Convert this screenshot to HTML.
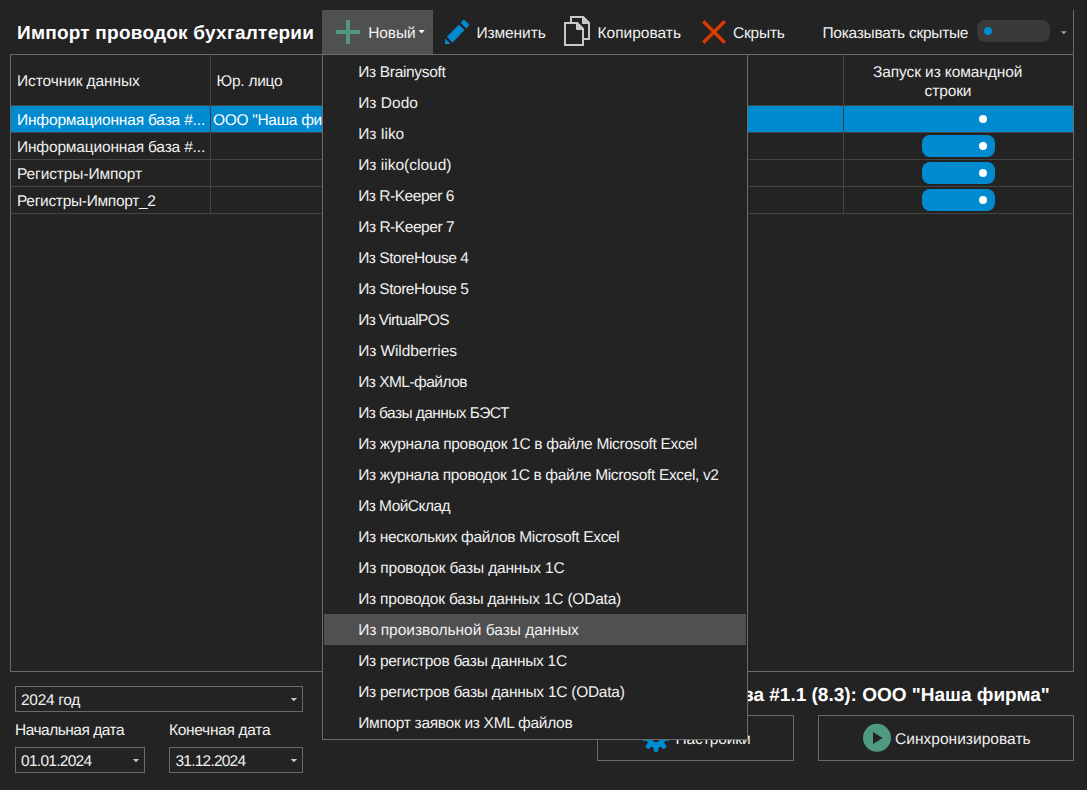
<!DOCTYPE html>
<html><head><meta charset="utf-8">
<style>
*{box-sizing:border-box;margin:0;padding:0}
html,body{width:1087px;height:790px;overflow:hidden;background:#232323;font-family:"Liberation Sans",sans-serif;color:#f0f0f0;text-rendering:geometricPrecision}
.a{position:absolute;white-space:nowrap}
.t{font-size:15.5px;line-height:18px}
.b{font-size:19px;line-height:22px;font-weight:bold;color:#fff}
.hl{position:absolute;background:#6a6a6a;height:1px}
.vl{position:absolute;background:#6a6a6a;width:1px}
.box{position:absolute;border:1px solid #6a6a6a}
</style></head><body>
<div class="a b" style="left:17px;top:23px;letter-spacing:0.23px;">Импорт проводок бухгалтерии</div>
<div class="a" style="left:322px;top:10px;width:111px;height:44px;background:#505050"></div>
<svg class="a" style="left:330px;top:14px" width="36" height="36" viewBox="0 0 36 36"><rect x="16" y="6" width="4" height="24" rx="1" fill="#52977e"/><rect x="6" y="16" width="24" height="4" rx="1" fill="#52977e"/></svg>
<div class="a t" style="left:368.2px;top:25px;letter-spacing:-0.1px;">Новый</div>
<svg class="a" style="left:410px;top:22px" width="20" height="18"><path d="M8.6 8H14.6L11.6 11.4Z" fill="#ffffff"/></svg>
<svg class="a" style="left:440px;top:15px" width="35" height="35" viewBox="0 0 35 35"><path d="M5 23.5L5 29L10.6 29Z" fill="#008acf"/><path d="M6.9 21.7L18.8 9.7L24.6 15.1L12.4 27.7Z" fill="#008acf"/><path d="M20.8 7.8L23.9 4.8L29 9.5L26.4 13.3Z" fill="#008acf" stroke="#008acf" stroke-width="0.6" stroke-linejoin="round"/></svg>
<div class="a t" style="left:476.5px;top:25px;letter-spacing:-0.1px;">Изменить</div>
<svg class="a" style="left:558px;top:12px" width="38" height="38" viewBox="0 0 38 38">
<path d="M13 5H25L31 11V27H13Z" fill="#232323" stroke="#c8c8c8" stroke-width="2"/>
<path d="M25 5V11H31Z" fill="#c8c8c8" stroke="#c8c8c8" stroke-width="2" stroke-linejoin="round"/>
<path d="M7 11H19L25 17V33H7Z" fill="#232323" stroke="#c8c8c8" stroke-width="2"/>
<path d="M19 11V17H25Z" fill="#c8c8c8" stroke="#c8c8c8" stroke-width="2" stroke-linejoin="round"/>
</svg>
<div class="a t" style="left:597.5px;top:25px;letter-spacing:0px;">Копировать</div>
<svg class="a" style="left:696px;top:14px" width="36" height="36" viewBox="0 0 36 36"><path d="M7.2 7.2L28.8 28.8M28.8 7.2L7.2 28.8" stroke="#d83b01" stroke-width="3.5"/></svg>
<div class="a t" style="left:733px;top:25px;letter-spacing:-0.2px;">Скрыть</div>
<div class="a t" style="left:822.5px;top:25px;letter-spacing:-0.27px;">Показывать скрытые</div>
<div class="a" style="left:977px;top:20px;width:73px;height:22px;border-radius:8px;background:#3a3a3a"></div>
<div class="a" style="left:984px;top:27px;width:8px;height:8px;border-radius:50%;background:#008acf"></div>
<svg class="a" style="left:1055px;top:25px" width="18" height="14"><path d="M5.8 6.3H11.8L8.8 9.3Z" fill="#a0a0a0"/></svg>
<div class="hl" style="left:10px;top:54px;width:1064px"></div>
<div class="vl" style="left:1073px;top:10px;height:662px"></div>
<div class="vl" style="left:10px;top:54px;height:618px"></div>
<div class="hl" style="left:10px;top:671px;width:1064px"></div>
<div class="hl" style="left:11px;top:105px;width:1062px;background:#444444"></div>
<div class="vl" style="left:210px;top:55px;height:159px;background:#444444"></div>
<div class="vl" style="left:843px;top:55px;height:159px;background:#444444"></div>
<div class="a t" style="left:17px;top:73px;letter-spacing:-0.1px;">Источник данных</div>
<div class="a t" style="left:216.5px;top:73px;letter-spacing:-0.25px;">Юр. лицо</div>
<div class="a t" style="left:873px;top:64px;letter-spacing:-0.1px;">Запуск из командной</div>
<div class="a t" style="left:924.5px;top:83px;letter-spacing:-0.1px;">строки</div>
<div class="a" style="left:11px;top:106px;width:1062px;height:26px;background:#008acf"></div>
<div class="vl" style="left:210px;top:106px;height:26px;background:#3c3c3c"></div>
<div class="vl" style="left:843px;top:106px;height:26px;background:#3c3c3c"></div>
<div class="hl" style="left:11px;top:132px;width:1062px;background:#444444"></div>
<div class="hl" style="left:11px;top:159px;width:1062px;background:#444444"></div>
<div class="hl" style="left:11px;top:186px;width:1062px;background:#444444"></div>
<div class="hl" style="left:11px;top:213px;width:1062px;background:#444444"></div>
<div class="a t" style="left:17px;top:112px;letter-spacing:-0.17px;color:#fff">Информационная база #...</div>
<div class="a t" style="left:213px;top:112px;letter-spacing:-0.3px;color:#fff;width:109px;overflow:hidden">ООО "Наша фирма"</div>
<div class="a t" style="left:17px;top:139px;letter-spacing:-0.17px;">Информационная база #...</div>
<div class="a t" style="left:17px;top:166px;letter-spacing:-0.1px;">Регистры-Импорт</div>
<div class="a t" style="left:17px;top:193px;letter-spacing:-0.3px;">Регистры-Импорт_2</div>
<div class="a" style="left:979px;top:115px;width:8px;height:8px;border-radius:50%;background:#fff"></div>
<div class="a" style="left:922px;top:135px;width:73px;height:22px;border-radius:8px;background:#008acf"></div>
<div class="a" style="left:979px;top:142px;width:8px;height:8px;border-radius:50%;background:#fff"></div>
<div class="a" style="left:922px;top:162px;width:73px;height:22px;border-radius:8px;background:#008acf"></div>
<div class="a" style="left:979px;top:169px;width:8px;height:8px;border-radius:50%;background:#fff"></div>
<div class="a" style="left:922px;top:189px;width:73px;height:22px;border-radius:8px;background:#008acf"></div>
<div class="a" style="left:979px;top:196px;width:8px;height:8px;border-radius:50%;background:#fff"></div>
<div class="box" style="left:15px;top:686px;width:288px;height:26px"></div>
<div class="a t" style="left:21px;top:692px;letter-spacing:-0.3px;">2024 год</div>
<svg class="a" style="left:285px;top:692px" width="16" height="14"><path d="M5.7 6H12.1L8.9 9.2Z" fill="#c8c8c8"/></svg>
<div class="a t" style="left:15px;top:722px;letter-spacing:-0.5px;">Начальная дата</div>
<div class="a t" style="left:169px;top:722px;letter-spacing:-0.3px;">Конечная дата</div>
<div class="box" style="left:15px;top:747px;width:130px;height:26px"></div>
<div class="a t" style="left:21px;top:753px;letter-spacing:-0.72px;">01.01.2024</div>
<svg class="a" style="left:127px;top:753px" width="16" height="14"><path d="M5.9 6H12.1L9 9.2Z" fill="#c8c8c8"/></svg>
<div class="box" style="left:169px;top:747px;width:134px;height:26px"></div>
<div class="a t" style="left:175.5px;top:753px;letter-spacing:-0.78px;">31.12.2024</div>
<svg class="a" style="left:285px;top:753px" width="16" height="14"><path d="M5.7 6H12.1L8.9 9.2Z" fill="#c8c8c8"/></svg>
<div class="a b" style="left:548px;top:685px;letter-spacing:0px;">Информационная база #1.1 (8.3): ООО "Наша фирма"</div>
<div class="box" style="left:597px;top:715px;width:197px;height:46px"></div>
<svg class="a" style="left:630px;top:712px" width="52" height="52" viewBox="0 0 52 52"><path d="M23.28 35.29 L23.98 39.85 L28.02 39.85 L28.72 35.29 L30.29 34.64 L34.01 37.37 L36.87 34.51 L34.14 30.79 L34.79 29.22 L39.35 28.52 L39.35 24.48 L34.79 23.78 L34.14 22.21 L36.87 18.49 L34.01 15.63 L30.29 18.36 L28.72 17.71 L28.02 13.15 L23.98 13.15 L23.28 17.71 L21.71 18.36 L17.99 15.63 L15.13 18.49 L17.86 22.21 L17.21 23.78 L12.65 24.48 L12.65 28.52 L17.21 29.22 L17.86 30.79 L15.13 34.51 L17.99 37.37 L21.71 34.64Z M29.6 26.5 A3.6 3.6 0 1 0 22.4 26.5 A3.6 3.6 0 1 0 29.6 26.5Z" fill="#008acf" fill-rule="evenodd"/></svg>
<div class="a t" style="left:675.5px;top:731px;letter-spacing:-0.1px;">Настройки</div>
<div class="box" style="left:818px;top:715px;width:256px;height:46px"></div>
<svg class="a" style="left:860px;top:722px" width="34" height="34" viewBox="0 0 34 34"><circle cx="17" cy="15.8" r="14" fill="#4f9a80"/><path d="M13 10V22L22.6 16Z" fill="#232323"/></svg>
<div class="a t" style="left:895px;top:731px;letter-spacing:0.03px;">Синхронизировать</div>
<div class="a" style="left:322px;top:54px;width:426px;height:686px;border:1px solid #6a6a6a;background:#232323"></div>
<div class="a" style="left:324px;top:614px;width:422px;height:31px;background:#505050"></div>
<div class="a t" style="left:358.2px;top:64px;letter-spacing:-0.32px">Из Brainysoft</div>
<div class="a t" style="left:358.2px;top:95px;letter-spacing:0.014px">Из Dodo</div>
<div class="a t" style="left:358.2px;top:126px;letter-spacing:-0.12px">Из Iiko</div>
<div class="a t" style="left:358.2px;top:157px;letter-spacing:0.003px">Из iiko(cloud)</div>
<div class="a t" style="left:358.2px;top:188px;letter-spacing:-0.47px">Из R-Keeper 6</div>
<div class="a t" style="left:358.2px;top:219px;letter-spacing:-0.453px">Из R-Keeper 7</div>
<div class="a t" style="left:358.2px;top:250px;letter-spacing:-0.477px">Из StoreHouse 4</div>
<div class="a t" style="left:358.2px;top:281px;letter-spacing:-0.477px">Из StoreHouse 5</div>
<div class="a t" style="left:358.2px;top:312px;letter-spacing:-0.637px">Из VirtualPOS</div>
<div class="a t" style="left:358.2px;top:343px;letter-spacing:-0.105px">Из Wildberries</div>
<div class="a t" style="left:358.2px;top:374px;letter-spacing:-0.536px">Из XML-файлов</div>
<div class="a t" style="left:358.2px;top:405px;letter-spacing:-0.565px">Из базы данных БЭСТ</div>
<div class="a t" style="left:358.2px;top:436px;letter-spacing:-0.311px">Из журнала проводок 1С в файле Microsoft Excel</div>
<div class="a t" style="left:358.2px;top:467px;letter-spacing:-0.349px">Из журнала проводок 1С в файле Microsoft Excel, v2</div>
<div class="a t" style="left:358.2px;top:498px;letter-spacing:-0.54px">Из МойСклад</div>
<div class="a t" style="left:358.2px;top:529px;letter-spacing:-0.32px">Из нескольких файлов Microsoft Excel</div>
<div class="a t" style="left:358.2px;top:560px;letter-spacing:-0.168px">Из проводок базы данных 1С</div>
<div class="a t" style="left:358.2px;top:591px;letter-spacing:-0.211px">Из проводок базы данных 1С (OData)</div>
<div class="a t" style="left:358.2px;top:622px;letter-spacing:-0.004px">Из произвольной базы данных</div>
<div class="a t" style="left:358.2px;top:653px;letter-spacing:-0.273px">Из регистров базы данных 1С</div>
<div class="a t" style="left:358.2px;top:684px;letter-spacing:-0.261px">Из регистров базы данных 1С (OData)</div>
<div class="a t" style="left:358.2px;top:715px;letter-spacing:-0.297px">Импорт заявок из XML файлов</div>
</body></html>
